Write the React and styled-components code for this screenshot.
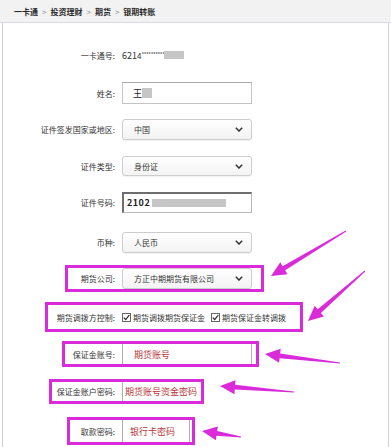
import React from "react";
import styled, { createGlobalStyle } from "styled-components";

const GlobalStyle = createGlobalStyle`
  body {
    margin: 0;
    background: #fff;
    font-family: "Noto Sans CJK SC", "Noto Sans", sans-serif;
  }
`;

const MAGENTA = "#d92bd9";

const Page = styled.div`
  position: relative;
  width: 391px;
  height: 447px;
  overflow: hidden;
  background: #fff;
`;

const Breadcrumb = styled.div`
  height: 22px;
  display: flex;
  align-items: center;
  padding-left: 14px;
  background: #f2f2f2;
  border-bottom: 1px solid #d6d8e2;
  font-size: 8px;
  font-weight: bold;
  color: #2a2a2a;
`;

const Sep = styled.span`
  margin: 0 4px;
  color: #8a8a8a;
  font-weight: normal;
`;

const Panel = styled.div`
  margin: 0 2px;
  height: 424px;
  border-left: 1px solid #d2d2d2;
  border-right: 1px solid #d2d2d2;
  display: flex;
  flex-direction: column;
`;

const Row = styled.div`
  display: flex;
  align-items: center;
  gap: 7px;
  flex-shrink: 0;
  margin-top: ${p => p.$top}px;
  height: ${p => p.$h}px;
`;

const Highlight = styled.div`
  box-sizing: border-box;
  display: flex;
  align-items: center;
  gap: 7px;
  flex-shrink: 0;
  margin-top: ${p => p.$top}px;
  margin-left: ${p => p.$left - 3}px;
  width: ${p => p.$width}px;
  height: ${p => p.$h}px;
  border: 3px solid ${MAGENTA};
`;

const Label = styled.span`
  width: ${p => p.$w || 112}px;
  flex-shrink: 0;
  text-align: right;
  font-size: 8px;
  color: #333;
  white-space: nowrap;
`;

const Value = styled.span`
  display: flex;
  align-items: center;
  font-size: 9px;
  color: #333;
`;

const Stars = styled.span`
  font-size: 6px;
  letter-spacing: -0.5px;
  color: #555;
  align-self: flex-start;
  margin-top: 1px;
`;

const Mask = styled.span`
  display: inline-block;
  width: ${p => p.$w}px;
  height: ${p => p.$h || 8}px;
  background: #c6c6c6;
`;

const TextBox = styled.div`
  box-sizing: border-box;
  width: 130px;
  height: ${p => p.$h || 22}px;
  display: flex;
  align-items: center;
  padding-left: ${p => p.$pad ?? 10}px;
  border: 1px solid #c4c4c4;
  border-top-color: #a8a8a8;
  background: #fff;
  font-size: 9px;
  color: #222;
`;

const InsetBox = styled(TextBox)`
  border: 1px solid #b8b8b8;
  border-top: 2px solid #6e6e6e;
  border-left: 2px solid #6e6e6e;
  padding-left: 3px;
  font-weight: bold;
  letter-spacing: 0.5px;
`;

const RedBox = styled.div`
  box-sizing: border-box;
  width: ${p => p.$w}px;
  height: ${p => p.$h}px;
  display: flex;
  align-items: center;
  padding-left: ${p => p.$pad}px;
  border-left: 1px solid #b0b0b0;
  border-right: ${p => (p.$right ? "1px solid #b0b0b0" : "none")};
  background: #fff;
  font-size: 9px;
  color: #b43a3a;
  white-space: nowrap;
  overflow: hidden;
`;

const SelectBox = styled.div`
  box-sizing: border-box;
  width: 130px;
  height: ${p => p.$h || 21}px;
  display: flex;
  align-items: center;
  justify-content: space-between;
  padding: 0 8px 0 11px;
  border: 1px solid #cdcdcd;
  border-radius: 3px;
  background: linear-gradient(#ffffff, #f3f3f3);
  box-shadow: 0 1px 1px rgba(0, 0, 0, 0.06);
  font-size: 8px;
  color: #333;
`;

const Chevron = () => (
  <svg width="8" height="5" viewBox="0 0 8 5">
    <path d="M0.8 0.8 L4 4 L7.2 0.8" fill="none" stroke="#333" strokeWidth="1.5" />
  </svg>
);

const Select = ({ children, h }) => (
  <SelectBox $h={h}>
    <span>{children}</span>
    <Chevron />
  </SelectBox>
);

const Checks = styled.div`
  display: flex;
  align-items: center;
  gap: 6px;
  font-size: 8px;
  color: #333;
  white-space: nowrap;
`;

const CheckItem = styled.span`
  display: flex;
  align-items: center;
  gap: 2px;
`;

const Box = styled.span`
  box-sizing: border-box;
  width: 9px;
  height: 9px;
  border: 1px solid #666;
  background: #fff;
  display: flex;
  align-items: center;
  justify-content: center;
`;

const Check = ({ children }) => (
  <CheckItem>
    <Box>
      <svg width="7" height="7" viewBox="0 0 7 7">
        <path d="M0.8 3.6 L2.7 5.6 L6.3 1" fill="none" stroke="#222" strokeWidth="1.2" />
      </svg>
    </Box>
    {children}
  </CheckItem>
);

const Overlay = styled.svg`
  position: absolute;
  left: 0;
  top: 0;
  pointer-events: none;
`;

function arrowPoints([x1, y1], [x2, y2]) {
  const dx = x2 - x1;
  const dy = y2 - y1;
  const len = Math.hypot(dx, dy);
  const ux = dx / len;
  const uy = dy / len;
  const nx = -uy;
  const ny = ux;
  const headLen = 15;
  const headW = 7;
  const shaftHead = 2.4;
  const shaftTail = 0.5;
  const bx = x2 - ux * headLen;
  const by = y2 - uy * headLen;
  const pts = [
    [x1 + nx * shaftTail, y1 + ny * shaftTail],
    [bx + nx * shaftHead, by + ny * shaftHead],
    [bx + nx * headW, by + ny * headW],
    [x2, y2],
    [bx - nx * headW, by - ny * headW],
    [bx - nx * shaftHead, by - ny * shaftHead],
    [x1 - nx * shaftTail, y1 - ny * shaftTail],
  ];
  return pts.map(p => p.map(v => v.toFixed(1)).join(",")).join(" ");
}

const arrows = [
  [[346, 231], [271, 276]],
  [[365, 271], [308, 321]],
  [[340, 363], [265, 354]],
  [[294, 392], [220, 386]],
  [[241, 437], [202, 431]],
];

export default function App() {
  return (
    <Page>
      <GlobalStyle />
      <Breadcrumb>
        一卡通<Sep>&gt;</Sep>投资理财<Sep>&gt;</Sep>期货<Sep>&gt;</Sep>银期转账
      </Breadcrumb>
      <Panel>
        <Row $top={22} $h={20}>
          <Label>一卡通号:</Label>
          <Value>
            621<span style={{ fontSize: 8 }}>4</span>
            <Stars>**********</Stars>
            <Mask $w={20} />
          </Value>
        </Row>
        <Row $top={17} $h={22}>
          <Label>姓名:</Label>
          <TextBox>
            王<Mask $w={10} $h={10} />
          </TextBox>
        </Row>
        <Row $top={15} $h={21}>
          <Label>证件签发国家或地区:</Label>
          <Select>中国</Select>
        </Row>
        <Row $top={16} $h={20}>
          <Label>证件类型:</Label>
          <Select h={20}>身份证</Select>
        </Row>
        <Row $top={16} $h={20}>
          <Label>证件号码:</Label>
          <InsetBox $h={21}>
            2102
            <Mask $w={74} $h={8} style={{ marginLeft: 2 }} />
          </InsetBox>
        </Row>
        <Row $top={20} $h={21}>
          <Label>币种:</Label>
          <Select>人民币</Select>
        </Row>
        <Highlight $top={12} $left={65} $width={199} $h={27}>
          <Label $w={47}>期货公司:</Label>
          <Select h={21}>方正中期期货有限公司</Select>
        </Highlight>
        <Highlight $top={10} $left={45} $width={258} $h={30}>
          <Label $w={67}>期货调拨方控制:</Label>
          <Checks>
            <Check>期货调拨期货保证金</Check>
            <Check>期货保证金转调拨</Check>
          </Checks>
        </Highlight>
        <Highlight $top={9} $left={62} $width={197} $h={26}>
          <Label $w={50}>保证金账号:</Label>
          <RedBox $w={130} $h={20} $pad={11} $right>
            期货账号
          </RedBox>
        </Highlight>
        <Highlight $top={12} $left={49} $width={155} $h={25}>
          <Label $w={63}>保证金账户密码:</Label>
          <RedBox $w={79} $h={19} $pad={2}>
            期货账号资金密码
          </RedBox>
        </Highlight>
        <Highlight $top={13} $left={67} $width={128} $h={28}>
          <Label $w={45}>取款密码:</Label>
          <RedBox $w={68} $h={22} $pad={7} $right>
            银行卡密码
          </RedBox>
        </Highlight>
      </Panel>
      <Overlay width="391" height="447" viewBox="0 0 391 447">
        {arrows.map(([t, h], i) => (
          <polygon key={i} points={arrowPoints(t, h)} fill={MAGENTA} />
        ))}
      </Overlay>
    </Page>
  );
}
